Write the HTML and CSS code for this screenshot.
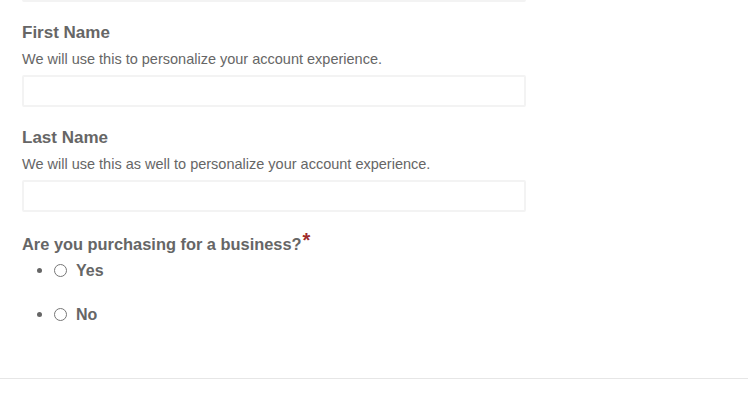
FILE: index.html
```html
<!DOCTYPE html>
<html>
<head>
<meta charset="utf-8">
<link rel="stylesheet" href="styles.css">
</head>
<body>
<main class="form">
  <div class="field field-prev">
    <input class="text-input" type="text">
  </div>
  <div class="field">
    <label class="field-label">First Name</label>
    <p class="help">We will use this to personalize your account experience.</p>
    <input class="text-input" type="text">
  </div>
  <div class="field">
    <label class="field-label">Last Name</label>
    <p class="help">We will use this as well to personalize your account experience.</p>
    <input class="text-input" type="text">
  </div>
  <div class="field question">
    <label class="field-label">Are you purchasing for a business?<span class="req">*</span></label>
    <ul class="options">
      <li><label class="option"><input class="radio" type="radio" name="biz"><span>Yes</span></label></li>
      <li><label class="option"><input class="radio" type="radio" name="biz"><span>No</span></label></li>
    </ul>
  </div>
</main>
<hr class="divider">
</body>
</html>
```
FILE: styles.css
```css
html, body {
  margin: 0;
  padding: 0;
  background: #fff;
}
body {
  font-family: "Liberation Sans", Arial, sans-serif;
  color: #666;
  width: 748px;
  height: 396px;
  overflow: hidden;
}
.form {
  padding: 0 0 0 22px;
}
.field {
  display: flex;
  flex-direction: column;
  align-items: flex-start;
}
.field-prev {
  margin-top: -30px;
}
.field-label {
  display: block;
  margin-top: 20px;
  font-size: 17px;
  line-height: 22px;
  font-weight: bold;
  color: #666;
}
.help {
  margin: 5px 0 0 0;
  font-size: 14.5px;
  line-height: 20px;
  color: #666;
}
.text-input {
  box-sizing: border-box;
  margin-top: 6px;
  width: 504px;
  height: 32px;
  border: 2px solid #f3f3f3;
  border-radius: 2px;
  background: #fff;
  outline: none;
}
.field-prev .text-input {
  margin-top: 0;
}
.question .field-label {
  margin-top: 21px;
  font-size: 16.4px;
}
.req {
  color: #a02c2c;
  font-size: 20px;
  line-height: 0;
  vertical-align: 3px;
  margin-left: 1px;
}
.options {
  margin: 0;
  padding: 0 0 0 31px;
  list-style: disc;
  color: #666;
  font-size: 16px;
}
.options li {
  margin-top: 4px;
  line-height: 22px;
}
.options li + li {
  margin-top: 21px;
}
.option {
  display: inline-flex;
  align-items: center;
  font-size: 16px;
  font-weight: bold;
  color: #666;
  vertical-align: middle;
}
.radio {
  margin: 0 9px 0 1px;
  width: 13px;
  height: 13px;
}
.divider {
  margin: 52px 0 0 0;
  border: 0;
  border-top: 1px solid #e6e6e6;
  height: 0;
}
```
